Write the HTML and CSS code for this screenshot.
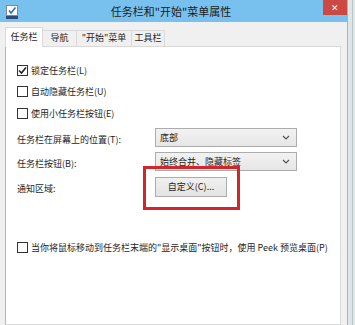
FILE: index.html
```html
<!DOCTYPE html>
<html>
<head>
<meta charset="utf-8">
<link rel="stylesheet" href="styles.css">
</head>
<body>
<div class="window">
  <div class="titlebar">
    <svg class="appicon" width="13" height="14" viewBox="0 0 13 14">
      <rect x="0.5" y="0.5" width="11" height="10" fill="#ffffff" stroke="#7a8a9a"/>
      <path d="M3 5.5 L5 8 L9.5 2.5" fill="none" stroke="#2b6fb6" stroke-width="1.6"/>
      <rect x="0" y="11" width="12" height="3" fill="#2d4a78"/>
    </svg>
    <div class="title">任务栏和"开始"菜单属性</div>
    <div class="close">✕</div>
  </div>
  <div class="dialog">
    <div class="tabs">
      <div class="tab active">任务栏</div>
      <div class="tab">导航</div>
      <div class="tab">"开始"菜单</div>
      <div class="tab">工具栏</div>
    </div>
    <div class="panel">
      <div class="check-row first"><span class="box checked"><svg width="9" height="9" viewBox="0 0 9 9"><path d="M1 4.5 L3.5 7 L8 1.5" fill="none" stroke="#222" stroke-width="1.6"/></svg></span><span>锁定任务栏(L)</span></div>
      <div class="check-row"><span class="box"></span><span>自动隐藏任务栏(U)</span></div>
      <div class="check-row"><span class="box"></span><span>使用小任务栏按钮(E)</span></div>
      <div class="settings">
        <div class="label">任务栏在屏幕上的位置(T):</div>
        <div class="select"><span>底部</span><svg width="8" height="5" viewBox="0 0 8 5"><path d="M1 1 L4 4 L7 1" fill="none" stroke="#555" stroke-width="1.2"/></svg></div>
        <div class="label">任务栏按钮(B):</div>
        <div class="select"><span>始终合并、隐藏标签</span><svg width="8" height="5" viewBox="0 0 8 5"><path d="M1 1 L4 4 L7 1" fill="none" stroke="#555" stroke-width="1.2"/></svg></div>
        <div class="label">通知区域:</div>
        <div class="btn-cell"><div class="button">自定义(C)...</div><div class="highlight"></div></div>
      </div>
      <div class="check-row peek"><span class="box"></span><span>当你将鼠标移动到任务栏末端的"显示桌面"按钮时，使用 Peek 预览桌面(P)</span></div>
    </div>
  </div>
</div>
<div class="backdrop"><div class="backline"></div></div>
</body>
</html>
```

FILE: styles.css
```css
* { box-sizing: border-box; }
html, body { margin: 0; padding: 0; }
body {
  width: 355px;
  height: 325px;
  overflow: hidden;
  display: flex;
  font-family: "Noto Sans CJK SC", "Liberation Sans", sans-serif;
  font-size: 9px;
  color: #1e1e1e;
  background: #dfe6e8;
}
.window {
  width: 348px;
  height: 325px;
  background: #f0f0f0;
  border-right: 1px solid #a9b4b8;
  display: flex;
  flex-direction: column;
}
.titlebar {
  height: 22px;
  background: #78c1ee;
  display: flex;
  align-items: center;
  position: relative;
}
.appicon { margin-left: 6px; margin-top: 1px; }
.title {
  flex: 1;
  text-align: center;
  font-size: 11px;
  color: #1c1c1c;
  padding-left: 0;
  padding-bottom: 1px;
  white-space: nowrap;
}
.close {
  align-self: flex-start;
  width: 24px;
  height: 15px;
  background: #cc4842;
  color: #fff;
  font-size: 9px;
  line-height: 15px;
  text-align: center;
}
.dialog {
  flex: 1;
  padding: 5px 0 0 5px;
  display: flex;
  flex-direction: column;
}
.tabs {
  display: flex;
  align-items: flex-end;
  height: 19px;
  position: relative;
  z-index: 1;
}
.tab {
  height: 16px;
  line-height: 14px;
  padding: 0;
  text-align: center;
  white-space: nowrap;
  border: 1px solid #d9d9d9;
  border-bottom: none;
  background: #f0f0f0;
  margin-left: -1px;
}
.tab.active {
  width: 38px;
  height: 20px;
  line-height: 18px;
  margin-left: 0;
  margin-bottom: -1px;
  background: #fff;
}
.tab:nth-child(2) { width: 35px; }
.tab:nth-child(3) { width: 56px; }
.tab:nth-child(4) { width: 34px; }
.panel {
  width: 336px;
  flex: 1;
  background: #fff;
  border: 1px solid #d9d9d9;
  border-left-color: #b4b4b4;
  padding: 13px 0 0 11px;
}
.check-row {
  display: flex;
  align-items: center;
  height: 21px;
  white-space: nowrap;
}
.check-row:nth-child(3) { height: 22px; }
.box {
  width: 11px;
  height: 11px;
  border: 1px solid #333;
  background: #fff;
  margin-right: 3px;
  display: flex;
  align-items: center;
  justify-content: center;
  flex: none;
}
.settings {
  margin-top: 4px;
  display: grid;
  grid-template-columns: 138px 142px;
  grid-template-rows: 19px 19px 20px;
  row-gap: 5px;
  align-items: center;
}
.label { padding-top: 4px; }
.select {
  height: 19px;
  border: 1px solid #acacac;
  background: linear-gradient(#f2f2f2, #e6e6e6);
  display: flex;
  align-items: center;
  justify-content: space-between;
  padding: 0 6px 0 4px;
}
.btn-cell { position: relative; height: 20px; margin-top: 1px; }
.button {
  width: 72px;
  height: 20px;
  border: 1px solid #acacac;
  background: linear-gradient(#f0f0f0, #e3e3e3);
  display: flex;
  align-items: center;
  justify-content: center;
}
.highlight {
  position: absolute;
  left: -12px;
  top: -11px;
  width: 97px;
  height: 44px;
  border: 3px solid #d3262b;
}
.check-row.peek { margin-top: 44px; height: 14px; }
.backdrop {
  flex: 1;
  display: flex;
  justify-content: flex-end;
}
.backline {
  width: 1px;
  margin-right: 2px;
  background: #b8c4c8;
}
```
